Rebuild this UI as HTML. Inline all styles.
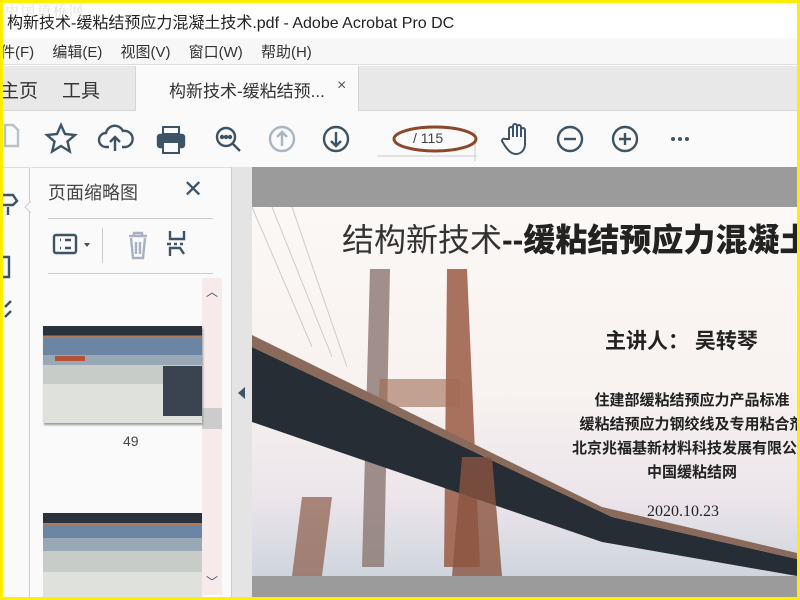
<!DOCTYPE html>
<html><head><meta charset="utf-8"><style>
*{margin:0;padding:0;box-sizing:border-box}
body{width:800px;height:600px;overflow:hidden;background:#ffee00;position:relative;font-family:"Liberation Sans","Noto Sans CJK SC",sans-serif}
.a{position:absolute}
</style></head><body>
<div class="a" style="left:3px;top:3px;width:794px;height:594px;background:#fff;overflow:hidden">
 <div class="a" style="left:4px;top:6px;font-size:16px;color:#222;white-space:nowrap">构新技术-缓粘结预应力混凝土技术.pdf - Adobe Acrobat Pro DC</div>
 <div class="a" style="left:2px;top:-2px;font-size:14px;color:#e0e0e0;font-family:'Noto Serif CJK SC',serif;letter-spacing:2px">中国道桥网</div>
 <div class="a" style="left:0;top:35px;width:794px;height:27px;background:#f7f7f7;border-bottom:1px solid #ddd"></div>
 <div class="a" style="left:-3px;top:38px;font-size:15px;color:#333;white-space:nowrap;word-spacing:14px">件(F) 编辑(E) 视图(V) 窗口(W) 帮助(H)</div>
 <div class="a" style="left:0;top:63px;width:794px;height:45px;background:#e8e8e8;border-bottom:1px solid #d4d4d4"></div>
 <div class="a" style="left:132px;top:63px;width:224px;height:45px;background:#fafafa;border-left:1px solid #d4d4d4;border-right:1px solid #d4d4d4"></div>
 <div class="a" style="left:-3px;top:73px;font-size:19px;color:#333">主页</div>
 <div class="a" style="left:59px;top:73px;font-size:19px;color:#333">工具</div>
 <div class="a" style="left:166px;top:74px;font-size:17px;color:#333">构新技术-缓粘结预...</div>
 <div class="a" style="left:334px;top:74px;font-size:16px;color:#555">×</div>
 <div class="a" style="left:0;top:108px;width:794px;height:56px;background:#fafafa"></div>
 <svg class="a" style="left:0;top:108px" width="794" height="56" fill="none" stroke="#3d5466" stroke-width="2.4">
  <path d="M2 14h8l5 5v16H2z" stroke="#b9c1cb"/>
  <path d="M58 14l4 9 10 1-7.5 6.5 2.3 10L58 35l-8.8 5.5 2.3-10L44 24l10-1z"/>
  <path d="M106 36h-3a7 7 0 0 1 0-14 9 9 0 0 1 17-2 7 7 0 0 1 3 16h-4M112 40V26m-5 5l5-5 5 5"/>
  <rect x="155" y="24" width="26" height="12" rx="2" fill="#3d5466"/><rect x="160" y="16" width="16" height="7" stroke-width="2"/><rect x="160" y="31" width="16" height="11" fill="#fafafa" stroke-width="2"/>
  <circle cx="223" cy="26" r="9"/><path d="M230 33l7 7"/><circle cx="219" cy="26" r="1" fill="#3d5466"/><circle cx="223" cy="26" r="1" fill="#3d5466"/><circle cx="227" cy="26" r="1" fill="#3d5466"/>
  <circle cx="279" cy="28" r="12" stroke="#aab5c2"/><path d="M279 35V21m-5 5l5-5 5 5" stroke="#aab5c2"/>
  <circle cx="333" cy="28" r="12"/><path d="M333 21v14m-5-5l5 5 5-5"/>
  <path d="M374 45h100M472 20v30" stroke="#ccc" stroke-width="1"/>
  <ellipse cx="432" cy="28" rx="41" ry="12" stroke="#8a4a2a" stroke-width="3"/>
  <path d="M506 28V18a2 2 0 0 1 4 0v8-11a2 2 0 0 1 4 0v11-10a2 2 0 0 1 4 0v10-7a2 2 0 0 1 4 0v14c0 6-4 10-9 10s-8-4-11-8l-3-5a2 2 0 0 1 3-2z" stroke-width="2"/>
  <circle cx="567" cy="28" r="12"/><path d="M561 28h12"/>
  <circle cx="622" cy="28" r="12"/><path d="M616 28h12M622 22v12"/>
  <circle cx="670" cy="28" r="2" fill="#3d5466" stroke="none"/><circle cx="677" cy="28" r="2" fill="#3d5466" stroke="none"/><circle cx="684" cy="28" r="2" fill="#3d5466" stroke="none"/>
 </svg>
 <div class="a" style="left:410px;top:127px;font-size:14px;color:#444">/ 115</div>
 <div class="a" style="left:0;top:164px;width:27px;height:430px;background:#fafafa;border-right:1px solid #ccc;border-top:1px solid #ddd"></div>
 <svg class="a" style="left:0;top:164px" width="40" height="160" fill="none" stroke="#3d5466" stroke-width="2.4">
  <path d="M0 28h10l4 6-4 4H0M5 40v8"/><path d="M0 90h6v20H0"/><path d="M2 140l6-6M2 150l6-6"/>
  <path d="M28 34l-6 6 6 6" stroke="#ccc" stroke-width="1" fill="#fafafa"/>
 </svg>
 <div class="a" style="left:28px;top:164px;width:200px;height:430px;background:#fafafa;border-top:1px solid #ddd"></div>
 <div class="a" style="left:45px;top:176px;font-size:18px;color:#444">页面缩略图</div>
 <div class="a" style="left:180px;top:172px;font-size:24px;color:#3d5466">✕</div>
 <div class="a" style="left:45px;top:215px;width:165px;height:1px;background:#ccc"></div>
 <div class="a" style="left:45px;top:270px;width:165px;height:1px;background:#ccc"></div>
 <div class="a" style="left:99px;top:225px;width:1px;height:35px;background:#ccc"></div>
 <svg class="a" style="left:45px;top:225px" width="165" height="40" fill="none" stroke="#3d5466" stroke-width="2.4">
  <rect x="6" y="7" width="22" height="18" rx="2"/><path d="M12 12h1M17 12h6M12 20h1M17 20h6"/><path d="M36 15l6 0-3 4z" fill="#3d5466" stroke="none"/>
  <path d="M81 8h18M86 8V5h8v3M83 10l2 20h10l2-20M88 14v12M92 14v12" stroke="#a6b2c0"/>
  <path d="M122 3v8h14V3M122 28v-8h10l4 6M119 16h4M126 16h3M132 16h3" />
 </svg>
 <div class="a" style="left:199px;top:275px;width:20px;height:317px;background:#f6eaea"></div>
 <div class="a" style="left:199px;top:405px;width:20px;height:21px;background:#ccc"></div>
 <div class="a" style="left:203px;top:280px;font-size:12px;color:#3d5466">︿</div>
 <div class="a" style="left:203px;top:570px;font-size:12px;color:#3d5466">﹀</div>
 <div class="a" style="left:40px;top:323px;width:159px;height:97px;background:linear-gradient(#2a323c 0 10%,#b07a5a 10% 12%,#6a86a4 12% 30%,#98a8b4 30% 40%,#c8ccc8 40% 60%,#dfe2dc 60%);box-shadow:1px 2px 2px #999"></div>
 <div class="a" style="left:160px;top:363px;width:39px;height:50px;background:#3a4450"></div>
 <div class="a" style="left:52px;top:353px;width:30px;height:5px;background:#b5533a"></div>
 <div class="a" style="left:120px;top:430px;font-size:14px;color:#444">49</div>
 <div class="a" style="left:40px;top:510px;width:159px;height:84px;background:linear-gradient(#2a323c 0 12%,#b07a5a 12% 14%,#6a86a4 14% 30%,#98a8b4 30% 45%,#c8ccc8 45% 70%,#dfe2dc 70%)"></div>
 <div class="a" style="left:228px;top:164px;width:21px;height:430px;background:#e4e4e4;border-left:1px solid #ccc"></div>
 <div class="a" style="left:235px;top:384px;width:0;height:0;border-top:6px solid transparent;border-bottom:6px solid transparent;border-right:7px solid #3d5466"></div>
 <div class="a" style="left:249px;top:164px;width:545px;height:430px;background:#9b9b9b"></div>
 <div class="a" style="left:249px;top:204px;width:545px;height:369px;background:linear-gradient(180deg,#fbf8f6 0%,#f8f2f0 50%,#ebe4ea 80%,#cfd5de 100%);overflow:hidden">
  <svg class="a" style="left:0;top:0" width="545" height="369">
   <polygon points="118,62 138,62 132,360 110,360" fill="#8a7570" opacity=".8"/>
   <polygon points="195,62 215,62 228,360 192,360" fill="#9a5a44" opacity=".85"/>
   <polygon points="128,172 208,172 208,200 126,200" fill="#a06a54" opacity=".6"/>
   <polygon points="0,140 0,215 350,335 545,369 545,352 360,310" fill="#262d35"/>
   <polygon points="0,128 0,140 360,310 545,352 545,346 350,300" fill="#8a6a5a"/>
   <polygon points="50,290 80,290 70,369 40,369" fill="#8a5a48" opacity=".7"/>
   <polygon points="210,250 240,250 250,369 200,369" fill="#8a5440" opacity=".8"/>
   <path d="M0 0L60 140M20 0L80 150M40 0L95 160" stroke="#ccc" stroke-width="1"/>
  </svg>
  <div class="a" style="left:90px;top:8px;font-size:32px;color:#333;white-space:nowrap">结构新技术<b style="color:#222;font-weight:900">--缓粘结预应力混凝土技术</b></div>
  <div class="a" style="left:353px;top:118px;font-size:21px;font-weight:bold;color:#222;white-space:nowrap">主讲人：&nbsp;吴转琴</div>
  <div class="a" style="left:300px;top:182px;font-size:15px;font-weight:bold;color:#222;line-height:24px;white-space:nowrap;text-align:center;width:280px">住建部缓粘结预应力产品标准<br>缓粘结预应力钢绞线及专用粘合剂<br>北京兆福基新材料科技发展有限公司<br>中国缓粘结网</div>
  <div class="a" style="left:395px;top:296px;font-size:16px;color:#222;font-family:'Liberation Serif',serif">2020.10.23</div>
 </div>
</div>
</body></html>
